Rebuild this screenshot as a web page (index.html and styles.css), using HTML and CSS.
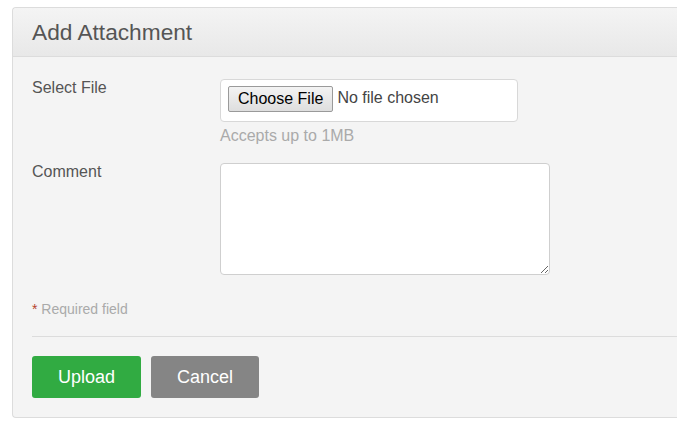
FILE: index.html
```html
<!DOCTYPE html>
<html lang="en">
<head>
<meta charset="utf-8">
<title>Add Attachment</title>
<link rel="stylesheet" href="styles.css">
</head>
<body>
<form class="panel">
  <div class="panel-header">
    <h2 class="panel-title">Add Attachment</h2>
  </div>
  <div class="panel-body">
    <div class="form-row">
      <label class="form-label">Select File</label>
      <div class="form-field">
        <label class="file-box">
          <input type="file" class="file-input">
          <span class="file-btn">Choose File</span>
          <span class="file-name">No file chosen</span>
        </label>
        <div class="help">Accepts up to 1MB</div>
      </div>
    </div>
    <div class="form-row comment-row">
      <label class="form-label">Comment</label>
      <div class="form-field">
        <textarea class="comment"></textarea>
      </div>
    </div>
    <div class="required"><span class="star">*</span> Required field</div>
    <div class="actions">
      <button type="button" class="btn btn-upload">Upload</button>
      <button type="button" class="btn btn-cancel">Cancel</button>
    </div>
  </div>
</form>
</body>
</html>
```
FILE: styles.css
```css
html, body {
  margin: 0;
  padding: 0;
  background: #fff;
}
body {
  padding: 7px 0 0 12px;
  font-family: "Liberation Sans", Arial, sans-serif;
  color: #555;
}
.panel {
  background: #f4f4f4;
  border: 1px solid #dcdcdc;
  border-right: none;
  border-radius: 4px 0 0 4px;
  margin: 0;
}
.panel-header {
  height: 48px;
  background: linear-gradient(to bottom, #f4f4f4, #e8e8e8);
  border-bottom: 1px solid #dcdcdc;
  border-radius: 4px 0 0 0;
  padding: 0 19px;
}
.panel-title {
  margin: 0;
  font-size: 22.7px;
  font-weight: normal;
  line-height: 48px;
  color: #555;
}
.panel-body {
  padding: 22px 0 19px 19px;
}
.form-row {
  display: flex;
}
.comment-row {
  margin-top: 17px;
}
.form-label {
  width: 188px;
  flex: none;
  font-size: 16px;
  line-height: 20px;
  margin-top: -1px;
}
.form-field {
  display: flex;
  flex-direction: column;
}
.file-box {
  box-sizing: border-box;
  width: 298px;
  height: 43px;
  background: #fff;
  border: 1px solid #d8d8d8;
  border-radius: 4px;
  padding: 6px 7px 0;
  display: flex;
  align-items: flex-start;
  font-size: 16px;
}
.file-input {
  display: none;
}
.file-btn {
  box-sizing: border-box;
  height: 26px;
  padding: 0 9px;
  line-height: 24px;
  border: 1px solid #9a9a9a;
  border-radius: 2px;
  background: linear-gradient(to bottom, #f3f3f3, #dedede);
  color: #000;
  font-size: 16px;
}
.file-name {
  margin-left: 4px;
  line-height: 24px;
  color: #444;
}
.help {
  margin-top: 4px;
  font-size: 16px;
  line-height: 20px;
  color: #aaa;
}
.comment {
  box-sizing: border-box;
  width: 330px;
  height: 112px;
  margin: 0;
  border: 1px solid #cfcfcf;
  border-radius: 4px;
  background: #fff;
  font-family: inherit;
}
.required {
  margin-top: 24px;
  font-size: 14px;
  line-height: 20px;
  color: #aaa;
  padding-bottom: 17px;
  border-bottom: 1px solid #dcdcdc;
}
.star {
  color: #b5442d;
}
.actions {
  display: flex;
  gap: 10px;
  margin-top: 19px;
}
.btn {
  height: 42px;
  padding: 0 26px;
  border: none;
  border-radius: 3px;
  color: #fff;
  font-family: inherit;
  font-size: 18px;
  cursor: pointer;
}
.btn-upload {
  background: #31ab42;
}
.btn-cancel {
  background: #858585;
}
```
